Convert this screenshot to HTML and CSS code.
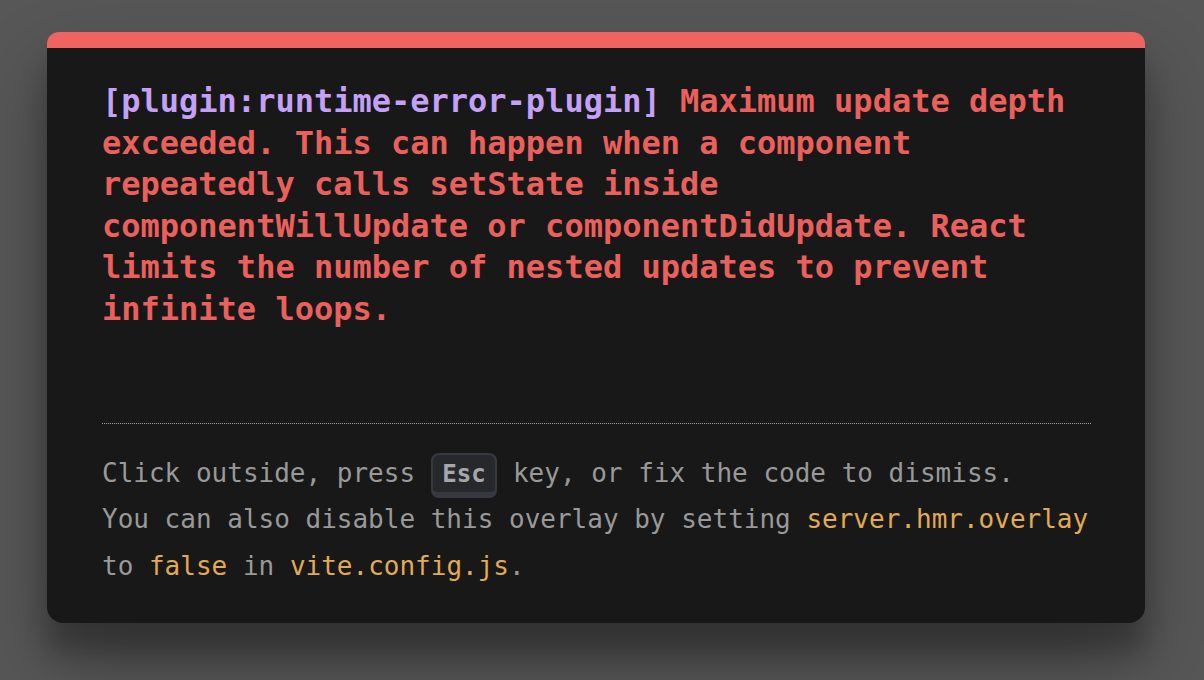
FILE: index.html
```html
<!DOCTYPE html>
<html lang="en">
<head>
<meta charset="utf-8">
<title>Vite error overlay</title>
<link rel="stylesheet" href="styles.css">
</head>
<body>
<div class="backdrop">
  <div class="window">
    <div class="message"><span class="plugin">[plugin:runtime-error-plugin]</span> <span class="message-body">Maximum update depth exceeded. This can happen when a component repeatedly calls setState inside componentWillUpdate or componentDidUpdate. React limits the number of nested updates to prevent infinite loops.</span></div>
    <div class="tip">Click outside, press <kbd class="key">Esc</kbd> key, or fix the code to dismiss.<br>You can also disable this overlay by setting <code class="code">server.hmr.overlay</code> to <code class="code">false</code> in <code class="code">vite.config.js</code>.</div>
  </div>
</div>
</body>
</html>
```

FILE: styles.css
```css
html, body {
  margin: 0;
  padding: 0;
}
body {
  background: #575757;
  width: 1204px;
  height: 680px;
  overflow: hidden;
}
.backdrop {
  padding-top: 32px;
  padding-left: 47px;
}
.window {
  box-sizing: border-box;
  width: 1098px;
  padding: 33px 54px 33px 55px;
  background: #181818;
  color: #d8d8d8;
  border-top: 16px solid #ef6461;
  border-radius: 12px 12px 16px 16px;
  box-shadow: 0 38px 76px rgba(0, 0, 0, 0.30), 0 30px 24px rgba(0, 0, 0, 0.22);
  font-family: "DejaVu Sans Mono", "Liberation Mono", monospace;
}
.message {
  font-size: 32px;
  line-height: 1.3;
  font-weight: 700;
  white-space: pre-wrap;
  margin-bottom: 92px;
}
.plugin {
  color: #c4a0f6;
}
.message-body {
  color: #ea605c;
}
.tip {
  font-size: 26px;
  line-height: 1.8;
  color: #999999;
  border-top: 1px dotted #a0a0a0;
  padding-top: 26px;
}
.code {
  font-family: "DejaVu Sans Mono", "Liberation Mono", monospace;
  font-size: 26px;
  color: #e2aa53;
}
.key {
  font-family: "DejaVu Sans Mono", "Liberation Mono", monospace;
  font-size: 24px;
  line-height: 1.5;
  font-weight: 700;
  background-color: rgb(38, 40, 44);
  color: rgb(166, 167, 171);
  padding: 4.8px 9.6px;
  border-radius: 8px;
  border-style: solid;
  border-width: 2px 2px 6px;
  border-color: rgb(54, 57, 64);
}
```
